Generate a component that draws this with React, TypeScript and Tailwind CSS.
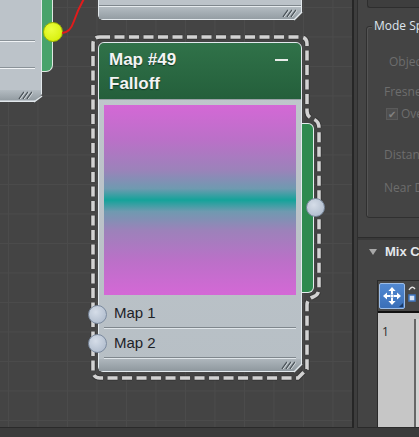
function Grip({ className }: { className?: string }) {
  return (
    <svg width="15" height="8" viewBox="0 0 15 8" className={`shrink-0 ${className ?? ''}`}>
      <path d="M1 8L6 1M5 8L10 1M9 8L14 1" stroke="#4d555b" strokeWidth="1.4" />
      <path d="M2.2 8L7.2 1M6.2 8L11.2 1M10.2 8L15.2 1" stroke="#e6ebee" strokeWidth="0.8" />
    </svg>
  )
}

function Socket({ className }: { className: string }) {
  return (
    <div
      className={`absolute h-[19px] w-[19px] rounded-full border border-[#7c8ba0] bg-[radial-gradient(circle_at_40%_35%,#d5dde8,#a8b5c7)] ${className}`}
    />
  )
}

function MoveIcon() {
  return (
    <svg width="20" height="20" viewBox="0 0 20 20" className="shrink-0">
      <path d="M10 1L13.6 5H11V8.3H9V5H6.4Z" fill="#fff" />
      <path d="M10 19L13.6 15H11V11.7H9V15H6.4Z" fill="#fff" />
      <path d="M1 10L5 6.4V9H8.3V11H5V13.6Z" fill="#fff" />
      <path d="M19 10L15 6.4V9H11.7V11H15V13.6Z" fill="#fff" />
      <rect x="8.6" y="8.6" width="2.8" height="2.8" fill="#fff" />
    </svg>
  )
}

const outline =
  'M100 37H300Q307 37 307 44V111Q307 117 313 119Q319 121 319 128V288Q319 295 313 297Q307 299 307 305V369L298 378H100Q93 378 93 371V44Q93 37 100 37Z'

function Canvas() {
  return (
    <div className="relative h-[428px] w-[352px] shrink-0 overflow-hidden border-b border-[#2a2a2a] bg-[#444444] bg-[linear-gradient(to_right,#4b4b4b_1px,transparent_1px),linear-gradient(to_bottom,#4b4b4b_1px,transparent_1px)] bg-size-[29.5px_29.5px] bg-position-[8px_7px]">
      {/* node cut off at the top */}
      <div className="absolute -top-[20px] left-[98px] flex h-[40px] w-[204px] flex-col rounded-bl-[5px] border border-[#e2e8ec] bg-[#bcc3c9] [clip-path:polygon(0_0,100%_0,100%_32px,196px_100%,0_100%)]">
        <div className="mt-[24px] h-[2px] border-t border-[#7f878d] bg-[#e6ebee]" />
        <div className="flex h-[12px] items-center justify-end bg-[linear-gradient(#b3bbc1,#949da3)] pr-[4px]">
          <Grip />
        </div>
      </div>

      {/* node cut off at the left */}
      <div className="absolute -left-[12px] -top-[12px] flex h-[114px] w-[54px] flex-col rounded-bl-[4px] border border-[#e2e8ec] bg-[#bcc3c9] [clip-path:polygon(0_0,100%_0,100%_106px,46px_100%,0_100%)]">
        <div className="mr-[6px] mt-[51px] h-[2px] border-t border-[#8a9298] bg-[#f0f3f5]" />
        <div className="mr-[6px] mt-[25px] h-[2px] border-t border-[#8a9298] bg-[#f0f3f5]" />
        <div className="mt-[21px] flex h-[10px] items-center justify-end bg-[linear-gradient(#b3bbc1,#949da3)] pr-[8px]">
          <Grip />
        </div>
      </div>
      <div className="absolute -top-[12px] left-[42px] h-[84px] w-[11px] rounded-br-[7px] border border-l-0 border-[#dfe9e2] bg-[#48a36b]" />
      <div className="absolute left-[43px] top-[22px] h-[20px] w-[20px] rounded-full border border-[#9fb400] bg-[radial-gradient(circle_at_40%_35%,#ecff40,#d3ec00)]" />

      {/* main node */}
      <div className="absolute left-[98px] top-[42px] flex h-[330px] w-[204px] flex-col rounded-bl-[5px] rounded-t-[6px] border border-[#e3eaee] bg-[linear-gradient(#c0c7cc,#b7bfc5)] [clip-path:polygon(0_0,100%_0,100%_322px,196px_100%,0_100%)]">
        <div className="relative h-[57px] rounded-t-[5px] border-b border-[#98a1a6] bg-[linear-gradient(#307249,#245f3b)] pl-[10px] pt-[5px] text-[17px] font-bold leading-[24px] text-[#f4f4f4] [text-shadow:0_1px_1px_#0f3320]">
          <div>Map #49</div>
          <div>Falloff</div>
          <div className="absolute right-[13px] top-[16px] h-[2px] w-[13px] bg-[#e8ece9]" />
        </div>
        <div className="mx-[5px] mt-[5px] h-[190px] bg-[linear-gradient(#d468d6_0%,#bb70c8_18%,#9c82ba_34%,#6f9ab0_44%,#14a39a_50%,#6f9ab0_56%,#9c82ba_66%,#bb70c8_82%,#d468d6_100%)]" />
        <div className="mt-[5px] flex h-[27px] items-center pl-[15px] text-[15px] text-[#1d2227]">Map 1</div>
        <div className="mx-[5px] h-[2px] border-t border-[#7f878d] bg-[#dfe5e9]" />
        <div className="flex h-[28px] items-center pl-[15px] text-[15px] text-[#1d2227]">Map 2</div>
        <div className="mx-[5px] h-[2px] border-t border-[#7f878d] bg-[#dfe5e9]" />
        <div className="flex h-[12px] items-center justify-end bg-[linear-gradient(#aeb6bc,#8f989e)] pr-[5px]">
          <Grip />
        </div>
      </div>

      <svg className="pointer-events-none absolute inset-0" width="352" height="428">
        <path d="M62 33Q70 33 74 21T85 -3" fill="none" stroke="#e01c1c" strokeWidth="2" />
        <path d="M302 364L294 372" stroke="#e3eaee" strokeWidth="1.5" />
        <path d="M42 96L34 102" stroke="#e3eaee" strokeWidth="1.5" />
        <path d="M302 12L294 20" stroke="#e3eaee" strokeWidth="1.5" />
        <path d={outline} fill="none" stroke="#2e2e2e" strokeWidth="5.5" strokeDasharray="10 4.5" opacity="0.6" />
        <path d={outline} fill="none" stroke="#d2d2d2" strokeWidth="3.5" strokeDasharray="10 4.5" />
      </svg>

      <div className="absolute left-[302px] top-[123px] h-[170px] w-[12px] rounded-r-[6px] border border-l-0 border-[#e4ecee] bg-[#2e8a4f]" />
      <Socket className="left-[306px] top-[198px]" />
      <Socket className="left-[88px] top-[305px]" />
      <Socket className="left-[88px] top-[334px]" />
    </div>
  )
}

function SidePanel() {
  return (
    <div className="flex h-[428px] flex-1 flex-col overflow-hidden border-b border-[#2a2a2a] bg-[#444444] font-['Open_Sans',sans-serif]">
      <div className="ml-[9px] h-[8px] shrink-0 rounded-bl-[3px] border-b border-l border-[#2e2e2e] bg-[#3e3e3e]" />

      <div className="relative ml-[8px] mt-[18px] h-[192px] w-[120px] shrink-0 rounded-[3px] border border-[#303030] shadow-[inset_1px_1px_0_#555555]">
        <div className="absolute -top-[9px] left-[5px] whitespace-nowrap bg-[#444444] px-[2px] text-[12px] leading-[16px] text-[#dfe6ee]">
          Mode Specific Parameters
        </div>
        <div className="flex flex-col whitespace-nowrap text-[12px] leading-[16px] text-[#6d6d6d]">
          <div className="mt-[27px] pl-[22px]">Object:</div>
          <div className="mt-[14px] pl-[17px]">Fresnel Parameters:</div>
          <div className="mt-[6px] flex h-[16px] items-center pl-[19px]">
            <div className="flex h-[12px] w-[12px] shrink-0 items-center justify-center border border-[#5a5a5a] bg-[#4e4e4e] text-[10px] leading-none text-[#828282]">
              ✔
            </div>
            <span className="ml-[3px]">Override Material IOR</span>
          </div>
          <div className="mt-[25px] pl-[17px]">Distance Blend Parameters:</div>
          <div className="mt-[17px] pl-[17px]">Near Distance:</div>
        </div>
      </div>

      <div className="mt-[19px] h-[3px] shrink-0 border-t border-[#2c2c2c] bg-[#393939]" />
      <div className="flex h-[24px] shrink-0 items-center whitespace-nowrap">
        <svg width="8" height="6" viewBox="0 0 8 6" className="ml-[11px] shrink-0">
          <path d="M0 0H8L4 6Z" fill="#a8a8a8" />
        </svg>
        <span className="ml-[8px] font-['Liberation_Sans',sans-serif] text-[13px] font-bold text-[#e4e8ec]">Mix Curve</span>
      </div>

      <div className="ml-[19px] mt-[16px] flex flex-1 flex-col border border-r-0 border-b-0 border-[#2a2a2a]">
        <div className="flex h-[32px] shrink-0 items-start gap-[2px] border-b-2 border-[#111111] bg-[#474747] pl-[1px] pt-[2px]">
          <div className="relative flex h-[26px] w-[26px] shrink-0 items-center justify-center rounded-[2px] border border-[#9cbde8] bg-[linear-gradient(#5289d2,#3a6fb8)]">
            <MoveIcon />
            <svg width="4" height="4" viewBox="0 0 4 4" className="absolute bottom-[1px] right-[1px]">
              <path d="M4 0V4H0Z" fill="#1b3a66" />
            </svg>
          </div>
          <svg width="14" height="24" viewBox="0 0 14 24" className="shrink-0">
            <path d="M2 7Q5 2 8 6" fill="none" stroke="#e6e6e6" strokeWidth="1.3" />
            <rect x="2" y="12" width="6" height="6" fill="#d8e4f4" stroke="#3f76c0" strokeWidth="1.5" />
          </svg>
        </div>
        <div className="flex flex-1 bg-[#c6c6c6]">
          <div className="w-[36px] shrink-0 pl-[4px] pt-[11px] text-[12px] leading-[16px] text-[#2a2a2a]">1</div>
          <div className="mt-[6px] w-[2px] shrink-0 bg-[#666666]" />
          <div className="mt-[6px] flex-1 bg-[#d2d2d2]" />
        </div>
      </div>
    </div>
  )
}

export default function App() {
  return (
    <div className="flex h-[437px] w-[419px] flex-col overflow-hidden bg-[#3c3c3c] font-['Liberation_Sans',Arial,sans-serif]">
      <div className="flex h-[428px] shrink-0">
        <Canvas />
        <div className="h-[428px] w-[6px] shrink-0 border-l-2 border-r border-l-[#262626] border-r-[#2e2e2e] bg-[#3d3d3d]" />
        <SidePanel />
      </div>
      <div className="h-[9px] bg-[#3b3b3b]" />
    </div>
  )
}
